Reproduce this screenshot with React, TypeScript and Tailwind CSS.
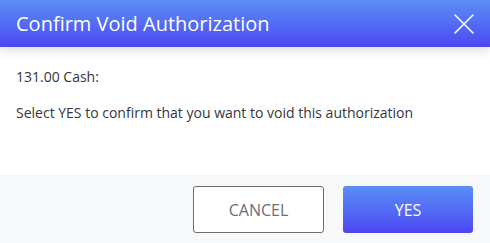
const App = () => {
    return (
        <div className="w-[490px] h-[243px] flex flex-col bg-white font-['Open_Sans',sans-serif] overflow-hidden">
            <div className="relative z-10 h-[47px] flex items-center justify-between pl-4 pr-[16px] bg-gradient-to-b from-[#5b8df6] to-[#4e45f1] shadow-[0_4px_10px_rgba(0,0,0,0.12)]">
                <h1 className="text-white text-[20px] leading-none">Confirm Void Authorization</h1>
                <svg width="20" height="20" viewBox="0 0 20 20" fill="none" stroke="white" strokeWidth="1.6" strokeLinecap="round">
                    <path d="M1 1 L19 19 M19 1 L1 19" />
                </svg>
            </div>
            <div className="flex-1 flex flex-col px-4 pt-[20px] text-[14px] text-[#333640]">
                <p className="leading-5">131.00 Cash:</p>
                <p className="leading-5 mt-[16px]">Select YES to confirm that you want to void this authorization</p>
            </div>
            <div className="h-[68px] flex items-start justify-end gap-[19px] pt-[11px] pr-[17px] bg-[#f7f8fa]">
                <button className="w-[131px] h-[47px] rounded-[3px] border border-[#6e6e6e] bg-white text-[16px] text-[#6b6e76]">
                    CANCEL
                </button>
                <button className="w-[130px] h-[47px] rounded-[3px] bg-gradient-to-b from-[#5b8df6] to-[#4e45f1] text-[16px] text-white">
                    YES
                </button>
            </div>
        </div>
    )
}

export default App
